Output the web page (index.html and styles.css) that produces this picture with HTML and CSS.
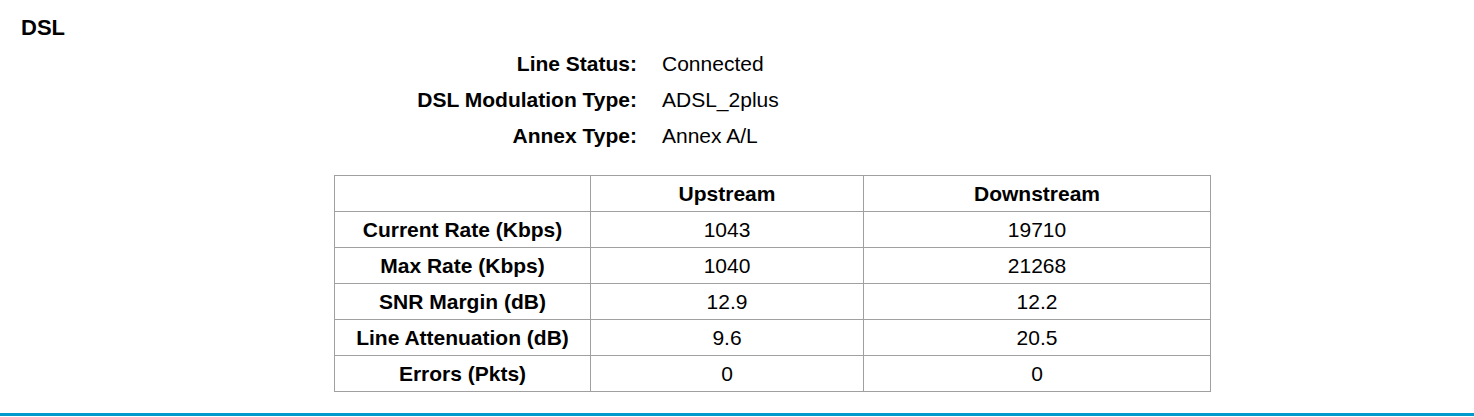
FILE: index.html
```html
<!DOCTYPE html>
<html>
<head>
<meta charset="utf-8">
<link rel="stylesheet" href="styles.css">
</head>
<body>
<div class="page">
  <h2 class="title">DSL</h2>
  <div class="info">
    <div class="label">Line Status:</div><div class="value">Connected</div>
    <div class="label">DSL Modulation Type:</div><div class="value">ADSL_2plus</div>
    <div class="label">Annex Type:</div><div class="value">Annex A/L</div>
  </div>
  <table class="stats">
    <colgroup><col class="c1"><col class="c2"><col class="c3"></colgroup>
    <tr class="head"><th></th><th>Upstream</th><th>Downstream</th></tr>
    <tr><th>Current Rate (Kbps)</th><td>1043</td><td>19710</td></tr>
    <tr><th>Max Rate (Kbps)</th><td>1040</td><td>21268</td></tr>
    <tr><th>SNR Margin (dB)</th><td>12.9</td><td>12.2</td></tr>
    <tr><th>Line Attenuation (dB)</th><td>9.6</td><td>20.5</td></tr>
    <tr><th>Errors (Pkts)</th><td>0</td><td>0</td></tr>
  </table>
  <div class="bar"></div>
</div>
</body>
</html>
```
FILE: styles.css
```css
html, body {
  margin: 0;
  padding: 0;
  background: #ffffff;
}
body {
  font-family: "Liberation Sans", Arial, sans-serif;
  font-size: 21px;
  color: #000000;
}
.page {
  width: 1474px;
  padding-top: 10px;
}
.title {
  margin: 0 0 0 21px;
  font-size: 22px;
  font-weight: bold;
  line-height: 36px;
}
.info {
  display: grid;
  grid-template-columns: 300px 1fr;
  column-gap: 25px;
  margin-left: 337px;
}
.label, .value {
  line-height: 36px;
}
.label {
  font-weight: bold;
  text-align: right;
}
.stats {
  margin: 21px 0 0 334px;
  border-collapse: collapse;
  width: 876px;
  table-layout: fixed;
}
.c1 { width: 256px; }
.c2 { width: 273px; }
.c3 { width: 347px; }
.stats th, .stats td {
  border: 1px solid #a0a0a0;
  height: 35px;
  padding: 0;
  text-align: center;
  vertical-align: middle;
  font-size: 21px;
  line-height: 24px;
}
.stats th { font-weight: bold; }
.stats td { font-weight: normal; }
.bar {
  margin-top: 21px;
  height: 3px;
  background: #0099cc;
}
```
